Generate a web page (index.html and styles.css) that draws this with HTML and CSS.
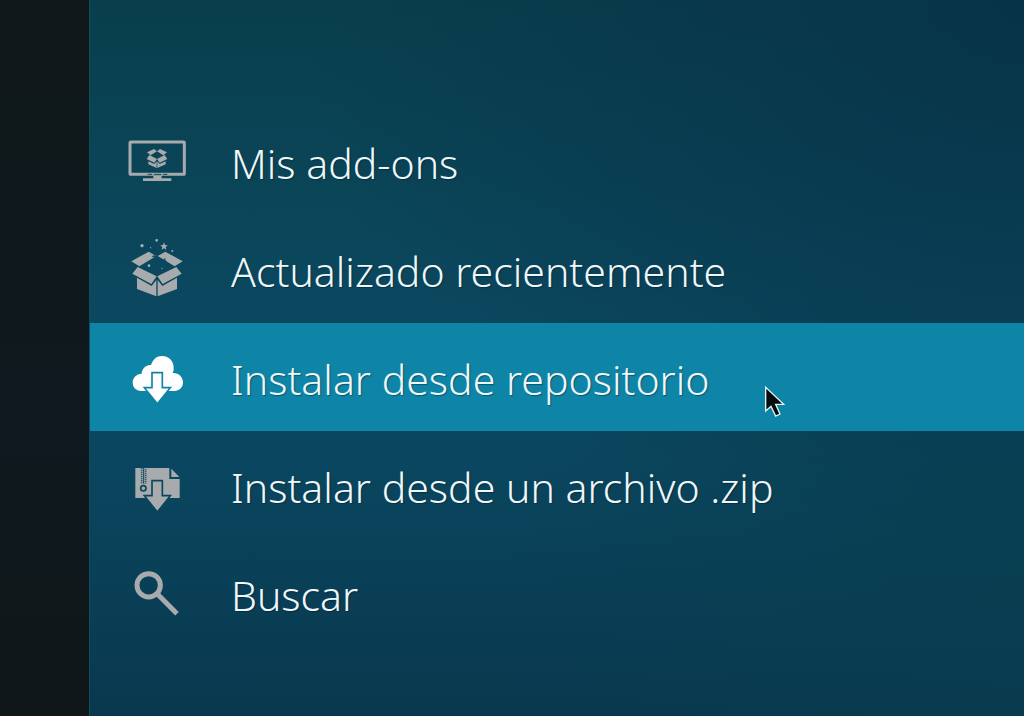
FILE: index.html
```html
<!DOCTYPE html>
<html lang="es">
<head>
    <meta charset="UTF-8">
    <meta name="viewport" content="width=device-width, initial-scale=1.0">
    <title>Add-ons</title>
    <link rel="stylesheet" href="styles.css">
</head>
<body>
    <div class="sidebar"></div>
    <main class="panel">
        <ul class="menu">
            <li>
                <button type="button" class="menu-item">
                    <svg class="icon" viewBox="0 0 240 240" aria-hidden="true">
                        <g transform="translate(0 21)">
                            <rect x="39" y="42" width="163" height="97" rx="2" fill="none" stroke="currentColor" stroke-width="9"/>
                            <path d="M109 143h25v8h29v8H78v-8h31z"/>
                            <path class="cut" d="M92 139h14M111 139h22M138 139h13"/>
                            <path d="M90 73l21-10 9 7-19 12zM150 73l-21-10-9 7 19 12zM97 81l23 12-8 11-23-11zM143 81l-23 12 8 11 23-11zM94 100l18 8 7-8v20l-25-11zM146 100l-18 8-7-8v20l25-11z"/>
                        </g>
                    </svg>
                    <span class="label">Mis add-ons</span>
                </button>
            </li>
            <li>
                <button type="button" class="menu-item">
                    <svg class="icon" viewBox="0 0 240 240" aria-hidden="true">
                        <g transform="translate(0 9)">
                            <!-- Solapas y caja -->
                            <path d="M43 88l52-29 23 13-51 31zM197 88l-52-29-23 13 51 31zM62 105l57 28-16 23-57-31zM178 105l-57 28 16 23 57-31zM60 137l44 25 14-18v49l-58-22zM180 137l-44 25-14-18v49l58-22z"/>
                            <!-- Estrellas -->
                            <path d="M141 31l3 8 8 1-6 5 2 8-7-4-7 4 2-8-6-5 8-1z"/>
                            <circle cx="119" cy="25" r="4"/>
                            <circle cx="75" cy="41" r="5"/>
                            <circle cx="166" cy="57" r="3"/>
                            <circle cx="101" cy="47" r="2"/>
                            <circle cx="96" cy="101" r="4"/>
                            <circle cx="135" cy="109" r="2"/>
                            <path class="cut" d="M105 73h14M112 67v12M136 82l13 6M144 78l-3 14"/>
                        </g>
                    </svg>
                    <span class="label">Actualizado recientemente</span>
                </button>
            </li>
            <li>
                <button type="button" class="menu-item active">
                    <svg class="icon" viewBox="0 0 240 240" aria-hidden="true">
                        <g transform="translate(0 25)">
                            <path d="M71 137a24 24 0 0 1-24-25c0-15 11-26 27-27 1-16 13-27 28-26 6-17 17-27 33-27 22 0 37 17 35 41-1 4-2 7-3 10 18-1 31 12 31 28 0 15-11 26-26 26z"/>
                            <path class="arrow" d="M105 82h31v45h24l-39 48-39-48h23z"/>
                        </g>
                    </svg>
                    <span class="label">Instalar desde repositorio</span>
                </button>
                <svg class="pointer" viewBox="0 0 150 150" aria-hidden="true">
                    <path d="M47 37v71l16-14 14 29 13-6-13-29h24z"/>
                </svg>
            </li>
            <li>
                <button type="button" class="menu-item">
                    <svg class="icon" viewBox="0 0 240 240" aria-hidden="true">
                        <g transform="translate(0 30)">
                            <path d="M55 39h102v33h31v57H55zM163 41l24 25h-24z"/>
                            <!-- Cremallera -->
                            <path class="teeth" d="M74 40v46M86 43v43"/>
                            <path class="cut" d="M80 39v47"/>
                            <circle class="ring" cx="79" cy="100" r="8"/>
                            <path class="arrow" d="M105 77h31v45h24l-39 49-39-49h23z"/>
                        </g>
                    </svg>
                    <span class="label">Instalar desde un archivo .zip</span>
                </button>
            </li>
            <li>
                <button type="button" class="menu-item">
                    <svg class="icon" viewBox="0 0 240 240" aria-hidden="true">
                        <g transform="translate(0 22)" fill="none" stroke="currentColor" stroke-width="15">
                            <circle cx="95" cy="75" r="35"/>
                            <path d="M119 99l61 61"/>
                        </g>
                    </svg>
                    <span class="label">Buscar</span>
                </button>
            </li>
        </ul>
    </main>
</body>
</html>
```
FILE: styles.css
```css
* {
    margin: 0;
    padding: 0;
    box-sizing: border-box;
}

body {
    display: flex;
    min-height: 100vh;
    font-family: "Noto Sans", "Open Sans", sans-serif;
    background: #0a4258;
}

/* Franja oscura de la izquierda */
.sidebar {
    flex: 0 0 89px;
    background: linear-gradient(180deg, #10181a, #0f191f 60%, #101719);
}

/* Panel con el fondo azul */
.panel {
    flex: 1;
    min-width: 0;
    padding: 107px 0 69px;
    border-left: 1px solid #0b4e5c;
    background:
        radial-gradient(ellipse at 100% 0%, rgba(7, 50, 72, 0.9), rgba(7, 50, 72, 0) 55%),
        radial-gradient(ellipse at 100% 75%, rgba(9, 62, 78, 0.7), rgba(9, 62, 78, 0) 40%),
        linear-gradient(180deg, #093f4c, #0a4456 22%, #0b4860 45%, #0a465f 65%, #09384e);
}

.menu {
    list-style: none;
}

.menu li {
    position: relative;
}

.menu-item {
    --row: #0b475c;
    display: flex;
    align-items: center;
    gap: 34px;
    width: 100%;
    height: 108px;
    padding: 0 27px;
    border: none;
    background: transparent;
    color: #a8abae;
    font-family: inherit;
    text-align: left;
    cursor: pointer;
}

.menu-item.active {
    --row: #0e85a7;
    background: var(--row);
    color: #fff;
}

.label {
    padding-top: 3px;
    color: #eef7fa;
    font-size: 41px;
    font-weight: 300;
    line-height: 54px;
    text-shadow: 1px 1px 1px rgba(0, 20, 30, 0.4);
}

/* Iconos */
.icon {
    flex: none;
    width: 80px;
    height: 80px;
    fill: currentColor;
}

.cut {
    fill: none;
    stroke: var(--row);
    stroke-width: 3;
}

.arrow {
    stroke: var(--row);
    stroke-width: 5;
}

.teeth {
    fill: none;
    stroke: var(--row);
    stroke-width: 5;
    stroke-dasharray: 3 3;
}

.ring {
    stroke: var(--row);
    stroke-width: 5;
}

/* Puntero del ratón */
.pointer {
    position: absolute;
    top: 52px;
    left: 660px;
    width: 50px;
    height: 50px;
    fill: #080b0d;
    stroke: #e4f3f7;
    stroke-width: 4;
    pointer-events: none;
}
```
